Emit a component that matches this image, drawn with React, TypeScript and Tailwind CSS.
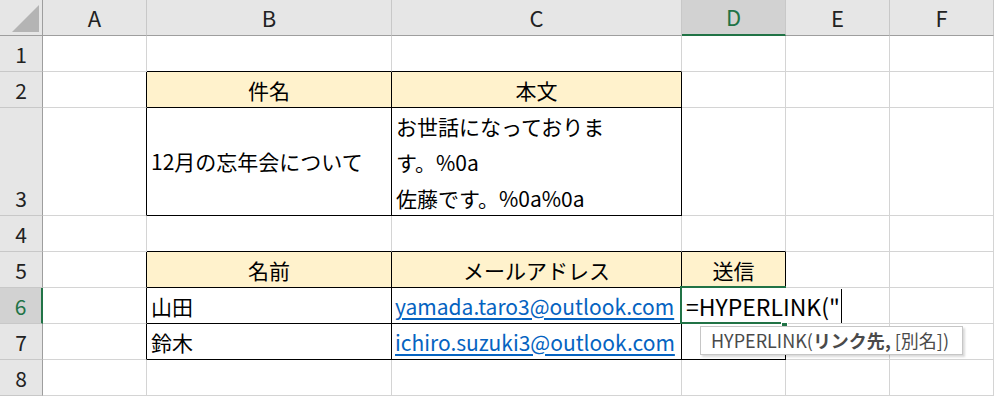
import React from "react";

const COLS = ["A", "B", "C", "D", "E", "F"];
const ROWS = [1, 2, 3, 4, 5, 6, 7, 8];

const blackRight = new Set([
  "A2", "A3", "B2", "C2", "B3", "C3",
  "A5", "A6", "A7", "B5", "C5", "D5", "B6", "C6", "D6", "B7", "C7", "D7",
]);
const blackBottom = new Set([
  "B1", "C1", "B2", "C2", "B3", "C3",
  "B4", "C4", "D4", "B5", "C5", "D5", "B6", "C6", "D6", "B7", "C7", "D7",
]);
const filled = new Set(["B2", "C2", "B5", "C5", "D5"]);

function Link({ children }: { children: React.ReactNode }) {
  return (
    <span className="text-[#0563c1] underline decoration-[#0563c1] underline-offset-[3px]">{children}</span>
  );
}

function content(id: string): React.ReactNode {
  switch (id) {
    case "B2":
      return <div className="flex h-full w-full items-center justify-center pt-[2px]">件名</div>;
    case "C2":
      return <div className="flex h-full w-full items-center justify-center pt-[2px]">本文</div>;
    case "B3":
      return <div className="flex h-full w-full items-center pl-[4px]">12月の忘年会について</div>;
    case "C3":
      return (
        <div className="flex h-full w-full flex-col pl-[4px] leading-[36px]">
          <div>お世話になっておりま</div>
          <div>す。%0a</div>
          <div>佐藤です。%0a%0a</div>
        </div>
      );
    case "B5":
      return <div className="flex h-full w-full items-center justify-center pt-[2px]">名前</div>;
    case "C5":
      return <div className="flex h-full w-full items-center justify-center pt-[2px]">メールアドレス</div>;
    case "D5":
      return <div className="flex h-full w-full items-center justify-center pt-[2px]">送信</div>;
    case "B6":
      return <div className="flex h-full w-full items-center pl-[4px] pt-[2px]">山田</div>;
    case "B7":
      return <div className="flex h-full w-full items-center pl-[4px] pt-[2px]">鈴木</div>;
    case "C6":
      return (
        <div className="flex h-full w-full items-center pl-[3px] pt-[2px]">
          <Link>yamada.taro3@outlook.com</Link>
        </div>
      );
    case "C7":
      return (
        <div className="flex h-full w-full items-center pl-[3px] pt-[2px]">
          <Link>ichiro.suzuki3@outlook.com</Link>
        </div>
      );
    case "D6":
      return (
        <>
          <div className="pointer-events-none absolute left-[-2px] top-[-2px] z-20 h-[38px] w-[106px] border-2 border-[#217346]" />
          <div className="absolute left-[0px] top-[0px] z-30 flex h-[34px] items-center bg-white pl-[4px] pt-[2px] text-[23px] whitespace-nowrap">
            <span>=HYPERLINK("</span>
            <span className="ml-[1px] inline-block h-[34px] w-px bg-black" />
          </div>
          <div className="absolute left-[99px] top-[34px] z-30 h-[6px] w-[7px] border border-white bg-[#217346]" />
        </>
      );
    default:
      return null;
  }
}

export default function App() {
  return (
    <div
      className="relative h-[396px] w-[994px] overflow-hidden bg-white text-[21px] text-black"
      style={{ fontFamily: '"Noto Sans CJK JP", "Noto Sans", sans-serif' }}
    >
      <div className="grid grid-cols-[43px_104px_245px_290px_104px_104px_104px] grid-rows-[36px_36px_36px_108px_36px_36px_36px_36px_36px]">
        {/* corner */}
        <div className="relative border-b border-r border-b-[#9e9e9e] border-r-[#9e9e9e] bg-[#e6e6e6]">
          <svg className="absolute left-[12px] top-[5px]" width="28" height="28" viewBox="0 0 28 28">
            <polygon points="0,27 27,27 27,0" fill="#b4b4b4" />
          </svg>
        </div>
        {COLS.map((c) => (
          <div
            key={c}
            className={
              c === "D"
                ? "flex items-center justify-center border-b-2 border-r border-b-[#217346] border-r-[#c8c8c8] bg-[#d2d2d2] pb-[2px] text-[22px] text-[#217346]"
                : "flex items-center justify-center border-b border-r border-b-[#9e9e9e] border-r-[#c8c8c8] bg-[#e6e6e6] pb-[1px] text-[22px] text-[#222]"
            }
          >
            {c}
          </div>
        ))}
        {ROWS.map((r) => (
          <React.Fragment key={r}>
            <div
              className={
                r === 6
                  ? "flex items-end justify-center border-b border-r-2 border-b-[#c8c8c8] border-r-[#217346] bg-[#d2d2d2] text-[#217346]"
                  : "flex items-end justify-center border-b border-r border-b-[#c8c8c8] border-r-[#9e9e9e] bg-[#e6e6e6] text-[#222]"
              }
            >
              <span className="block h-[35px] pt-[1px] leading-[35px]">{r}</span>
            </div>
            {COLS.map((c) => {
              const id = `${c}${r}`;
              const rCls = blackRight.has(id) ? "border-r-black" : "border-r-[#d4d4d4]";
              const bCls = blackBottom.has(id) ? "border-b-black" : "border-b-[#d4d4d4]";
              const bg = filled.has(id) ? "bg-[#fff2cc]" : "bg-white";
              const z = id === "D6" ? "z-20" : "";
              return (
                <div key={id} className={`relative border-b border-r ${rCls} ${bCls} ${bg} ${z}`}>
                  {content(id)}
                </div>
              );
            })}
          </React.Fragment>
        ))}
      </div>
      {/* function tooltip */}
      <div className="absolute left-[700px] top-[326px] z-40 flex h-[29px] w-[263px] items-center border border-[#c6c6c6] bg-white pl-[10px] text-[18px] text-[#4a4a4a] shadow-[2px_2px_2px_rgba(0,0,0,0.15)]">
        <span>HYPERLINK(</span>
        <span className="font-bold">リンク先</span>
        <span className="font-bold">,</span>
        <span>&nbsp;[別名])</span>
      </div>
    </div>
  );
}
